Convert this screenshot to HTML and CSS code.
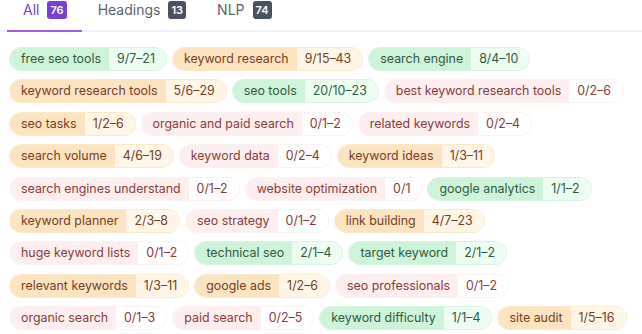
FILE: index.html
```html
<!DOCTYPE html>
<html lang="en">
<head>
    <meta charset="UTF-8">
    <title>Keywords</title>
    <link rel="stylesheet" href="styles.css">
</head>
<body>
    <div class="tabs">
        <div class="tab active">All <span class="count">76</span></div>
        <div class="tab">Headings <span class="count">13</span></div>
        <div class="tab">NLP <span class="count">74</span></div>
    </div>

    <div class="terms">
        <span class="term green"><span class="name">free seo tools</span><span class="num">9/7–21</span></span>
        <span class="term orange"><span class="name">keyword research</span><span class="num">9/15–43</span></span>
        <span class="term green"><span class="name">search engine</span><span class="num">8/4–10</span></span>
        <span class="term orange"><span class="name">keyword research tools</span><span class="num">5/6–29</span></span>
        <span class="term green"><span class="name">seo tools</span><span class="num">20/10–23</span></span>
        <span class="term red"><span class="name">best keyword research tools</span><span class="num">0/2–6</span></span>
        <span class="term orange"><span class="name">seo tasks</span><span class="num">1/2–6</span></span>
        <span class="term red"><span class="name">organic and paid search</span><span class="num">0/1–2</span></span>
        <span class="term red"><span class="name">related keywords</span><span class="num">0/2–4</span></span>
        <span class="term orange"><span class="name">search volume</span><span class="num">4/6–19</span></span>
        <span class="term red"><span class="name">keyword data</span><span class="num">0/2–4</span></span>
        <span class="term orange"><span class="name">keyword ideas</span><span class="num">1/3–11</span></span>
        <span class="term red"><span class="name">search engines understand</span><span class="num">0/1–2</span></span>
        <span class="term red"><span class="name">website optimization</span><span class="num">0/1</span></span>
        <span class="term green"><span class="name">google analytics</span><span class="num">1/1–2</span></span>
        <span class="term orange"><span class="name">keyword planner</span><span class="num">2/3–8</span></span>
        <span class="term red"><span class="name">seo strategy</span><span class="num">0/1–2</span></span>
        <span class="term orange"><span class="name">link building</span><span class="num">4/7–23</span></span>
        <span class="term red"><span class="name">huge keyword lists</span><span class="num">0/1–2</span></span>
        <span class="term green"><span class="name">technical seo</span><span class="num">2/1–4</span></span>
        <span class="term green"><span class="name">target keyword</span><span class="num">2/1–2</span></span>
        <span class="term orange"><span class="name">relevant keywords</span><span class="num">1/3–11</span></span>
        <span class="term orange"><span class="name">google ads</span><span class="num">1/2–6</span></span>
        <span class="term red"><span class="name">seo professionals</span><span class="num">0/1–2</span></span>
        <span class="term red"><span class="name">organic search</span><span class="num">0/1–3</span></span>
        <span class="term red"><span class="name">paid search</span><span class="num">0/2–5</span></span>
        <span class="term green"><span class="name">keyword difficulty</span><span class="num">1/1–4</span></span>
        <span class="term orange"><span class="name">site audit</span><span class="num">1/5–16</span></span>
    </div>
</body>
</html>
```

FILE: styles.css
```css
* {
    margin: 0;
    padding: 0;
    box-sizing: border-box;
}

body {
    font-family: Inter, 'Liberation Sans', sans-serif;
    background: #fff;
    width: 642px;
    height: 334px;
    overflow: hidden;
}

.tabs {
    display: flex;
    border-bottom: 2px solid #f0f4f9;
    padding-left: 7px;
    height: 32px;
}

.tab {
    display: flex;
    align-items: flex-start;
    gap: 8px;
    padding: 0 15px 0 16px;
    font-size: 14px;
    line-height: 20px;
    color: #5b6371;
    height: 32px;
}

.tab.active {
    color: #7b3fd0;
    border-bottom: 2px solid #9a5ee0;
    margin-bottom: -2px;
}

.count {
    margin-top: 1px;
    background: #4a5261;
    color: #fff;
    font-size: 11px;
    font-weight: 600;
    line-height: 18px;
    padding: 0 3px;
    border-radius: 3px;
}

.tab.active .count {
    background: #7b3fd0;
}

.terms {
    display: flex;
    flex-wrap: wrap;
    gap: 8.4px 5px;
    padding: 15px 9px 0;
}

.term {
    display: inline-flex;
    height: 24px;
    border-radius: 12px;
    overflow: hidden;
    font-size: 12.4px;
    line-height: 22px;
    border: 1px solid;
}

.name {
    padding: 0 8px 0 11px;
}

.num {
    padding: 0 11px 0 8px;
}

.green {
    border-color: #d3f5de;
    color: #2f5c41;
}
.green .name { background: #cdf3d9; }
.green .num { background: #edfdf2; }

.orange {
    border-color: #fde8c8;
    color: #7a3d22;
}
.orange .name { background: #fde4c0; }
.orange .num { background: #fff6e8; }

.red {
    border-color: #fdf0f0;
    color: #8a3b3b;
}
.red .name { background: #fdefef; }
.red .num { background: #fff; }
```
